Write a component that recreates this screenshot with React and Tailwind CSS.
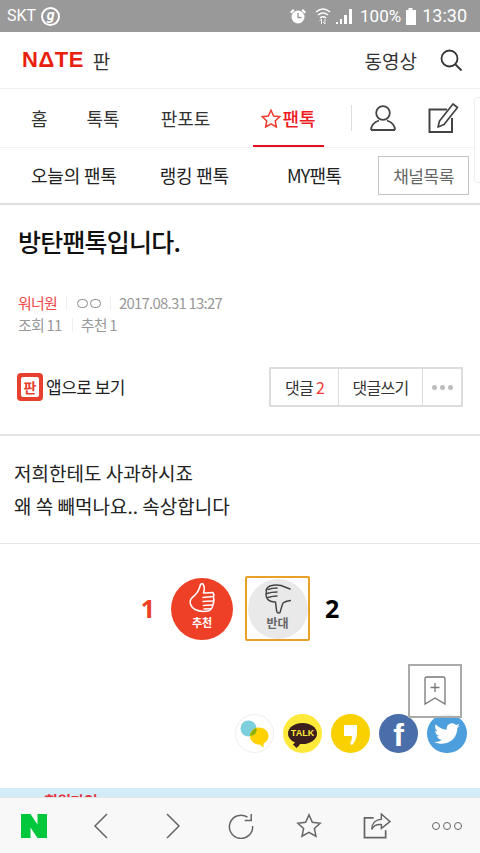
import React from "react";

const font = { fontFamily: '"Noto Sans CJK KR","Noto Sans",sans-serif' };

function StatusBar() {
  return (
    <div className="h-8 shrink-0 bg-[#999999] flex items-center pl-[7px] pr-[13px] text-white">
      <span className="text-[16px] leading-none font-['Roboto']">SKT</span>
      <span className="ml-[5px] w-[19px] h-[19px] rounded-full border-2 border-white flex items-center justify-center text-[14px] font-bold italic leading-none pb-[3px] font-['Roboto']">g</span>
      <div className="ml-auto flex items-center">
        <svg width="18" height="18" viewBox="0 0 18 18" className="mr-[8px]">
          <circle cx="9" cy="10" r="6.5" fill="#fff" />
          <path d="M9 6v4.5h3.5" stroke="#999" strokeWidth="1.3" fill="none" />
          <path d="M1 5l3-3 1.5 1.500-3 3zM17 5l-3-3-1.500 1.500 3 3z" fill="#fff" />
        </svg>
        <svg width="16" height="20" viewBox="0 0 16 20" className="mr-[5px]">
          <path d="M1 6q7-6 14 0M3 9q5-4 10 0M5 12q3-2.500 6 0" stroke="#fff" strokeWidth="1.300" fill="none" />
          <path d="M6.500 14v5M4.500 16l2-2M10 19v-5M8 17l2 2" stroke="#eee" strokeWidth="1" fill="none" transform="translate(0 -1)" />
        </svg>
        <svg width="17" height="16" viewBox="0 0 17 16" className="mr-[7px]">
          <path d="M0 16h2v-2H0zM4 16h2v-5H4zM8 16h3V7H8zM13 16h3V1h-3z" fill="#fff" />
        </svg>
        <span className="text-[17px] leading-none font-['Roboto']">100%</span>
        <svg width="12" height="17" viewBox="0 0 12 17" className="ml-[4px] mr-[5px]">
          <path d="M3.500 0h4v2H11v15H1V2h2.500z" fill="#fff" />
        </svg>
        <span className="text-[18px] leading-none font-['Roboto']">13:30</span>
      </div>
    </div>
  );
}

function Header() {
  return (
    <div className="h-[57px] shrink-0 border-b border-[#f0f0f0] flex items-center pl-[22px] pr-[17px]">
      <span className="text-[#e8210f] text-[22px] font-bold leading-none font-['Liberation_Sans'] tracking-[0.5px]">NΔTE</span>
      <span className="ml-[9px] text-[19px] text-[#333] leading-none">판</span>
      <span className="ml-auto text-[19px] text-[#333] leading-none">동영상</span>
      <svg width="24" height="24" viewBox="0 0 24 24" className="ml-[22px]" fill="none" stroke="#333" strokeWidth="1.800">
        <circle cx="10.500" cy="10.500" r="8" />
        <path d="M16.500 16.500l6 6" />
      </svg>
    </div>
  );
}

function Nav() {
  return (
    <div className="relative h-[59px] shrink-0 border-b border-[#f2f2f2] flex items-center text-[18px] text-[#333]">
      <span className="ml-[31px]">홈</span>
      <span className="ml-[39px]">톡톡</span>
      <span className="ml-[41px]">판포토</span>
      <div className="relative ml-[51px] flex items-center font-medium text-[#ed1c24]">
        <svg width="20" height="19" viewBox="0 0 24 23" fill="none" stroke="#ed3a2c" strokeWidth="1.800" className="mr-[1px]">
          <path d="M12 1.500l3.200 6.900 7.300.9-5.400 5.100 1.400 7.400-6.500-3.700-6.500 3.700 1.400-7.400L1.500 9.300l7.300-.9z" />
        </svg>
        팬톡
        <span className="absolute left-[-8px] right-[-8px] top-[40px] h-[2px] bg-[#e60f1f]" />
      </div>
      <span className="ml-[35px] w-px h-[26px] bg-[#ddd]" />
      <svg width="26" height="27" viewBox="0 0 26 27" fill="none" stroke="#444" strokeWidth="1.800" className="ml-[18px]">
        <circle cx="13" cy="8" r="6.800" />
        <path d="M1 25c0-6 4-8 8-9.500M25 25c0-6-4-8-8-9.500M1 25h24" />
      </svg>
      <svg width="32" height="32" viewBox="0 0 32 32" fill="none" stroke="#444" className="ml-[32px]">
        <path d="M24 16v14H1.500V7.500H19" strokeWidth="2" />
        <path d="M10 25l1.500-6L25 2l4.500 3.500L16 22.500z" strokeWidth="1.700" strokeLinejoin="round" />
      </svg>
      <div className="absolute left-[474px] top-[8px] w-[20px] h-[86px] border border-[#eee] rounded-[4px] bg-white" />
    </div>
  );
}

function SubNav() {
  return (
    <div className="h-[57px] shrink-0 border-b-2 border-[#dfdfdf] flex items-center text-[18px] text-[#222] tracking-[-0.2px]">
      <span className="ml-[31px]">오늘의 팬톡</span>
      <span className="ml-[43px]">랭킹 팬톡</span>
      <span className="ml-[58px] tracking-[-0.8px]">MY팬톡</span>
      <span className="ml-[37px] w-[91px] h-[39px] border border-[#c4c4c4] flex items-center justify-center text-[17px] text-[#666] tracking-[-0.5px]">채널목록</span>
    </div>
  );
}

function Meta() {
  return (
    <div className="mt-[33px] ml-[18px] text-[15px] text-[#999] leading-[22px] tracking-[-0.8px]">
      <div className="flex items-center">
        <span className="text-[#f04a4a]">워너원</span>
        <span className="ml-[9px] w-px h-[14px] bg-[#eee]" />
        <span className="ml-[10px] flex gap-[2px]">
          <span className="w-[11px] h-[9px] rounded-full border border-[#888]" />
          <span className="w-[11px] h-[9px] rounded-full border border-[#888]" />
        </span>
        <span className="ml-[9px] w-px h-[14px] bg-[#eee]" />
        <span className="ml-[8px] tracking-[-0.8px]">2017.08.31 13:27</span>
      </div>
      <div className="flex items-center">
        <span>조회 11</span>
        <span className="ml-[10px] w-px h-[14px] bg-[#eee]" />
        <span className="ml-[8px]">추천 1</span>
      </div>
    </div>
  );
}

function AppRow() {
  return (
    <div className="mt-[31px] ml-[17px] mr-[17px] flex items-center justify-between">
      <div className="flex items-center">
        <span className="w-[26px] h-[28px] rounded-[4px] bg-[#e8402f] flex items-center justify-center">
          <span className="w-[18px] h-[20px] rounded-[2px] bg-white flex items-center justify-center text-[#e8402f] text-[14px] font-bold leading-none">판</span>
        </span>
        <span className="ml-[3px] text-[17px] tracking-[-0.5px] text-[#222]">앱으로 보기</span>
      </div>
      <div className="flex h-[40px] border-2 border-[#dcdcdc] text-[16px] text-[#333] tracking-[-0.7px]">
        <span className="w-[67px] flex items-center justify-center">댓글&nbsp;<span className="text-[#f23a3a]">2</span></span>
        <span className="w-[84px] border-l border-[#dcdcdc] flex items-center justify-center">댓글쓰기</span>
        <span className="w-[39px] border-l border-[#dcdcdc] flex items-center justify-center gap-[3px]">
          <span className="w-[5px] h-[5px] rounded-full bg-[#bbb]" />
          <span className="w-[5px] h-[5px] rounded-full bg-[#bbb]" />
          <span className="w-[5px] h-[5px] rounded-full bg-[#bbb]" />
        </span>
      </div>
    </div>
  );
}

function Vote() {
  return (
    <div className="mt-[32px] flex items-center justify-center relative h-[65px]">
      <span className="text-[25px] font-bold text-[#ee4026] font-['Open_Sans'] leading-none">1</span>
      <div className="ml-[16px] w-[62px] h-[62px] rounded-full bg-[#ee4026] flex flex-col items-center pt-[5px]">
        <svg width="26" height="31" viewBox="0 0 26 31" fill="none" stroke="#fff" strokeWidth="1.500" strokeLinejoin="round" strokeLinecap="round">
          <path d="M14 1c1.500 2.500 1.500 6 .5 9 3.500 0 7-.5 9-.500 1.500.5 1.500 3 1 4 .5 3 .5 6-.5 8-.5 3-2 6-5 6.500-4 .7-9 .5-13-1.500-4-2-5.500-6.500-4.500-9.500.7-2 3-3.500 5-5.500 2.500-2.500 4-6 5-10 .8-.8 2-.8 2.500-.5z" />
          <path d="M14 14.500c3-.5 7-.5 10-1M14 18.500c3-.5 7-.5 10.500-.5M14.500 22.500c3-.5 6-.5 9.500-.5M15 26c2.500-.2 4.500-.2 6.500-.2" />
        </svg>
        <span className="text-[11px] font-bold text-white leading-none mt-[3px]">추천</span>
      </div>
      <div className="ml-[12px] w-[65px] h-[65px] border-2 border-[#e8a028] rounded-[2px] flex items-center justify-center">
        <div className="w-[60px] h-[60px] shrink-0 rounded-full bg-[#e9e9e9] flex flex-col items-center pt-[5px]">
          <svg width="26" height="30" viewBox="0 0 26 30" fill="none" stroke="#444" strokeWidth="1.500" strokeLinejoin="round" strokeLinecap="round">
            <path d="M25 5l-9-3.500C12 .5 8 1 5 2 2 3 .5 6 1.500 8c-.7 2-.5 5 1 7 2 2.500 5 3 8 3 .5 3 .5 7 1.500 10 .5 1 2 1.500 3 .5 1-3 1.500-6 3-9.500 2-1.500 4.500-2 7.500-2.500" />
            <path d="M3 5.500c3-1 6-1.500 9-1.500M2 9.500c3-1 7-1.500 10-1.500M3 13.500c3-1 6-1.500 9-1.500" />
          </svg>
          <span className="text-[12px] font-bold text-[#666] leading-none mt-[3px]">반대</span>
        </div>
      </div>
      <span className="ml-[15px] text-[25px] font-bold text-black font-['Open_Sans'] leading-none">2</span>
    </div>
  );
}

function Share() {
  return (
    <div className="relative mt-[73px] h-[39px] flex justify-end pr-[13px] gap-[9px]">
      <span className="w-[39px] h-[39px] rounded-full border border-[#eee] bg-white flex items-center justify-center">
        <svg width="29" height="28" viewBox="0 0 29 28">
          <circle cx="8.500" cy="8.500" r="8" fill="#7dcfdc" />
          <path d="M19 7.500c5 0 9.500 3.500 9.500 8.500 0 3.500-2 6-5 7.500v4l-4-3c-5 0-9.500-3.500-9.500-8.500s4-8.500 9-8.500z" fill="#ffd200" />
          <path d="M10.200 16c0-3.500 2-6 5.800-8 .6 1 .8 2 .5 3-.7 3-2.800 4.500-6.300 5z" fill="#8ab20a" />
        </svg>
      </span>
      <span className="w-[39px] h-[39px] rounded-full bg-[#ffe93a] flex items-center justify-center">
        <span className="relative w-[29px] h-[21px] rounded-[50%] bg-[#3b1e1e] flex items-center justify-center text-[#ffe93a] text-[9px] font-bold font-['Liberation_Sans'] leading-none">
          TALK
          <span className="absolute left-[6px] bottom-[-3px] w-[5px] h-[5px] bg-[#3b1e1e] rotate-45" />
        </span>
      </span>
      <span className="w-[39px] h-[39px] rounded-full bg-[#fad100] flex items-center justify-center">
        <svg width="14" height="26" viewBox="0 0 14 26">
          <path d="M0 6h13v8c0 4-2 9-5 12l-2-1c1-2 2-5 2-8H0z" fill="#fff" transform="translate(0 -2)" />
        </svg>
      </span>
      <span className="w-[39px] h-[39px] rounded-full bg-[#4a6ea9] flex items-center justify-center text-white text-[32px] font-bold font-['Liberation_Sans'] leading-none pt-[3px]">f</span>
      <span className="w-[40px] h-[39px] rounded-full bg-[#4c9edc] flex items-center justify-center">
        <svg width="26" height="22" viewBox="0 0 24 20" fill="#fff">
          <path d="M24 2.400c-.9.400-1.800.700-2.800.800 1-.6 1.800-1.600 2.200-2.700-1 .6-2 1-3.100 1.200C19.300.7 18 0 16.600 0c-2.700 0-4.900 2.200-4.900 4.900 0 .4 0 .8.100 1.100C7.700 5.800 4.100 3.800 1.700.9c-.4.700-.7 1.600-.7 2.500 0 1.700.9 3.200 2.200 4.100-.8 0-1.600-.2-2.200-.6v.1c0 2.400 1.700 4.400 3.900 4.800-.4.100-.8.200-1.300.2-.3 0-.6 0-.9-.1.600 2 2.400 3.400 4.600 3.400-1.700 1.300-3.800 2.100-6.100 2.100-.4 0-.8 0-1.200-.1C2.200 18.200 4.800 19 7.500 19c9.100 0 14-7.500 14-14v-.6c1-.7 1.800-1.600 2.500-2z" />
        </svg>
      </span>
      <div className="absolute right-[18px] top-[-50px] w-[54px] h-[54px] border-2 border-[#aaa] bg-white/90 flex items-center justify-center">
        <svg width="22" height="30" viewBox="0 0 22 30" fill="none" stroke="#777" strokeWidth="1.300">
          <path d="M3 1h16a2 2 0 0 1 2 2v25l-10-6-10 6V3a2 2 0 0 1 2-2z" />
          <path d="M11 7v9M6.500 11.500h9" />
        </svg>
      </div>
    </div>
  );
}

function Toolbar() {
  const icon = "#666";
  return (
    <div className="h-[56px] shrink-0 bg-[#f8f8f8] border-t border-[#e5e5e5] flex items-center relative">
      <svg width="26" height="24" viewBox="0 0 26 24" className="ml-[21px]">
        <path d="M0 0h9.500l7 10.500V0H26v24h-9.500l-7-10.500V24H0z" fill="#00c73c" />
      </svg>
      <svg width="16" height="26" viewBox="0 0 16 26" fill="none" stroke={icon} strokeWidth="1.500" className="ml-[46px]"><path d="M14 1L2 13l12 12" /></svg>
      <svg width="16" height="26" viewBox="0 0 16 26" fill="none" stroke={icon} strokeWidth="1.500" className="ml-[56px]"><path d="M2 1l12 12L2 25" /></svg>
      <svg width="26" height="26" viewBox="0 0 28 28" fill="none" stroke={icon} strokeWidth="1.600" className="ml-[47px]">
        <path d="M21 4.500A12.500 12.500 0 1 0 26.500 14" />
        <path d="M25 1v7h-7" />
      </svg>
      <svg width="26" height="26" viewBox="0 0 28 27" fill="none" stroke={icon} strokeWidth="1.600" className="ml-[42px]">
        <path d="M14 1.500l3.600 8 8.400 1-6.200 5.700 1.700 8.300-7.500-4.200-7.500 4.200 1.700-8.300L2 10.500l8.400-1z" />
      </svg>
      <svg width="28" height="26" viewBox="0 0 29 27" fill="none" stroke={icon} strokeWidth="1.500" className="ml-[41px]">
        <path d="M11 5H1.500v20.500h22V18" strokeWidth="1.800" />
        <path d="M19 1l9 8-9 7v-4c-5-.5-8 1-10 5 0-6 4-10 10-10.500z" />
      </svg>
      <div className="ml-[41px] flex gap-[3px]">
        <span className="w-[8px] h-[8px] rounded-full border-[1.500px] border-[#666]" />
        <span className="w-[8px] h-[8px] rounded-full border-[1.500px] border-[#666]" />
        <span className="w-[8px] h-[8px] rounded-full border-[1.500px] border-[#666]" />
      </div>
    </div>
  );
}

export default function App() {
  return (
    <div className="w-[480px] h-[853px] bg-white flex flex-col overflow-hidden" style={font}>
      <StatusBar />
      <Header />
      <Nav />
      <SubNav />
      <div className="flex-1 overflow-hidden flex flex-col">
        <h1 className="mt-[18px] ml-[18px] text-[25px] font-medium leading-[36px] tracking-[-0.8px] text-[#111]">방탄팬톡입니다.</h1>
        <Meta />
        <AppRow />
        <div className="mt-[27px] h-[2px] shrink-0 bg-[#e3e3e3]" />
        <div className="mt-[20px] ml-[14px] text-[19px] leading-[33px] text-[#222]">
          <p>저희한테도 사과하시죠</p>
          <p>왜 쏙 빼먹나요.. 속상합니다</p>
        </div>
        <div className="mt-[21px] h-px shrink-0 bg-[#e6e6e6]" />
        <Vote />
        <Share />
        <div className="mt-[35px] h-[30px] shrink-0 bg-[#d2ecf9] pl-[44px] pt-[5px] text-[15px] font-bold leading-none text-[#e8323c] tracking-[-0.5px]">회원가입</div>
      </div>
      <Toolbar />
    </div>
  );
}
